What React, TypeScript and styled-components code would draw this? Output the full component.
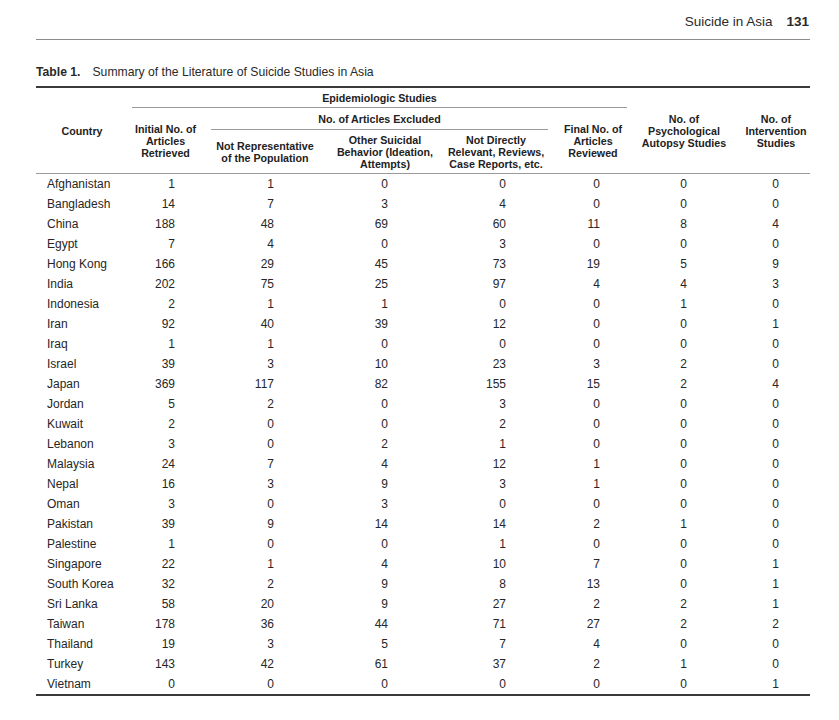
import React from "react";
import styled, { createGlobalStyle } from "styled-components";

const GlobalStyle = createGlobalStyle`
  html, body { margin: 0; padding: 0; background: #ffffff; }
  body { font-family: "Liberation Sans", Arial, Helvetica, sans-serif; color: #262626; }
`;

const COLS = "92px 75px 124px 116px 106px 88px 98px 75px";

const Page = styled.div`
  width: 774px;
  margin-left: 36px;
`;

const RunningHead = styled.header`
  display: flex;
  justify-content: flex-end;
  align-items: baseline;
  padding: 15px 1px 10px 0;
  font-size: 13.5px;
  line-height: 14px;
  color: #2a2a2a;
  border-bottom: 1px solid #8c8c8c;
`;

const PageNumber = styled.span`
  font-weight: 700;
  margin-left: 14px;
`;

const Caption = styled.div`
  margin-top: 25px;
  margin-bottom: 7px;
  font-size: 12.2px;
  line-height: 14px;
  color: #2a2a2a;
`;

const CaptionLabel = styled.span`
  font-weight: 700;
  margin-right: 12px;
`;

const Table = styled.div`
  border-top: 2px solid #3a3a3a;
  border-bottom: 2px solid #3a3a3a;
`;

const Head = styled.div`
  display: grid;
  grid-template-columns: ${COLS};
  grid-template-rows: 20px 22px 43px;
  border-bottom: 1px solid #9a9a9a;
`;

const HeadCell = styled.div<{ $col: string; $row: string; $pl?: number; $pr?: number }>`
  grid-column: ${(p) => p.$col};
  grid-row: ${(p) => p.$row};
  display: flex;
  align-items: center;
  justify-content: center;
  text-align: center;
  font-size: 10.7px;
  line-height: 12px;
  font-weight: 700;
  color: #222;
  padding-left: ${(p) => p.$pl ?? 0}px;
  padding-right: ${(p) => p.$pr ?? 0}px;
`;

const SpanHead = styled.div<{ $col: string; $row: string; $ml: number; $mr: number }>`
  grid-column: ${(p) => p.$col};
  grid-row: ${(p) => p.$row};
  margin-left: ${(p) => p.$ml}px;
  margin-right: ${(p) => p.$mr}px;
  border-bottom: 1px solid #9a9a9a;
  display: flex;
  align-items: center;
  justify-content: center;
  font-size: 10.7px;
  line-height: 12px;
  font-weight: 700;
  color: #222;
`;

const Row = styled.div`
  display: grid;
  grid-template-columns: ${COLS};
  height: 20px;
  align-items: center;
  font-size: 12px;
  line-height: 20px;
  color: #262626;
`;

const CountryCell = styled.div`
  padding-left: 11px;
  white-space: nowrap;
`;

const NumCell = styled.div<{ $pr: number }>`
  text-align: right;
  padding-right: ${(p) => p.$pr}px;
`;

const NUM_PADS = [28, 53, 55, 43, 37, 48, 31];

const DATA: [string, number[]][] = [
  ["Afghanistan", [1, 1, 0, 0, 0, 0, 0]],
  ["Bangladesh", [14, 7, 3, 4, 0, 0, 0]],
  ["China", [188, 48, 69, 60, 11, 8, 4]],
  ["Egypt", [7, 4, 0, 3, 0, 0, 0]],
  ["Hong Kong", [166, 29, 45, 73, 19, 5, 9]],
  ["India", [202, 75, 25, 97, 4, 4, 3]],
  ["Indonesia", [2, 1, 1, 0, 0, 1, 0]],
  ["Iran", [92, 40, 39, 12, 0, 0, 1]],
  ["Iraq", [1, 1, 0, 0, 0, 0, 0]],
  ["Israel", [39, 3, 10, 23, 3, 2, 0]],
  ["Japan", [369, 117, 82, 155, 15, 2, 4]],
  ["Jordan", [5, 2, 0, 3, 0, 0, 0]],
  ["Kuwait", [2, 0, 0, 2, 0, 0, 0]],
  ["Lebanon", [3, 0, 2, 1, 0, 0, 0]],
  ["Malaysia", [24, 7, 4, 12, 1, 0, 0]],
  ["Nepal", [16, 3, 9, 3, 1, 0, 0]],
  ["Oman", [3, 0, 3, 0, 0, 0, 0]],
  ["Pakistan", [39, 9, 14, 14, 2, 1, 0]],
  ["Palestine", [1, 0, 0, 1, 0, 0, 0]],
  ["Singapore", [22, 1, 4, 10, 7, 0, 1]],
  ["South Korea", [32, 2, 9, 8, 13, 0, 1]],
  ["Sri Lanka", [58, 20, 9, 27, 2, 2, 1]],
  ["Taiwan", [178, 36, 44, 71, 27, 2, 2]],
  ["Thailand", [19, 3, 5, 7, 4, 0, 0]],
  ["Turkey", [143, 42, 61, 37, 2, 1, 0]],
  ["Vietnam", [0, 0, 0, 0, 0, 0, 1]],
];

export default function App() {
  return (
    <>
      <GlobalStyle />
      <Page>
        <RunningHead>
          <span>Suicide in Asia</span>
          <PageNumber>131</PageNumber>
        </RunningHead>
        <Caption>
          <CaptionLabel>Table 1.</CaptionLabel>
          Summary of the Literature of Suicide Studies in Asia
        </Caption>
        <Table>
          <Head>
            <HeadCell $col="1" $row="1 / 4">Country</HeadCell>
            <SpanHead $col="2 / 7" $row="1" $ml={4} $mr={10}>
              Epidemiologic Studies
            </SpanHead>
            <HeadCell $col="7" $row="1 / 4" $pr={4}>
              No. of
              <br />
              Psychological
              <br />
              Autopsy Studies
            </HeadCell>
            <HeadCell $col="8" $row="1 / 4" $pl={7}>
              No. of
              <br />
              Intervention
              <br />
              Studies
            </HeadCell>
            <HeadCell $col="2" $row="2 / 4">
              Initial No. of
              <br />
              Articles
              <br />
              Retrieved
            </HeadCell>
            <SpanHead $col="3 / 6" $row="2" $ml={8} $mr={1}>
              No. of Articles Excluded
            </SpanHead>
            <HeadCell $col="6" $row="2 / 4">
              Final No. of
              <br />
              Articles
              <br />
              Reviewed
            </HeadCell>
            <HeadCell $col="3" $row="3">
              Not Representative
              <br />
              of the Population
            </HeadCell>
            <HeadCell $col="4" $row="3">
              Other Suicidal
              <br />
              Behavior (Ideation,
              <br />
              Attempts)
            </HeadCell>
            <HeadCell $col="5" $row="3">
              Not Directly
              <br />
              Relevant, Reviews,
              <br />
              Case Reports, etc.
            </HeadCell>
          </Head>
          {DATA.map(([country, values]) => (
            <Row key={country}>
              <CountryCell>{country}</CountryCell>
              {values.map((v, i) => (
                <NumCell key={i} $pr={NUM_PADS[i]}>
                  {v}
                </NumCell>
              ))}
            </Row>
          ))}
        </Table>
      </Page>
    </>
  );
}
